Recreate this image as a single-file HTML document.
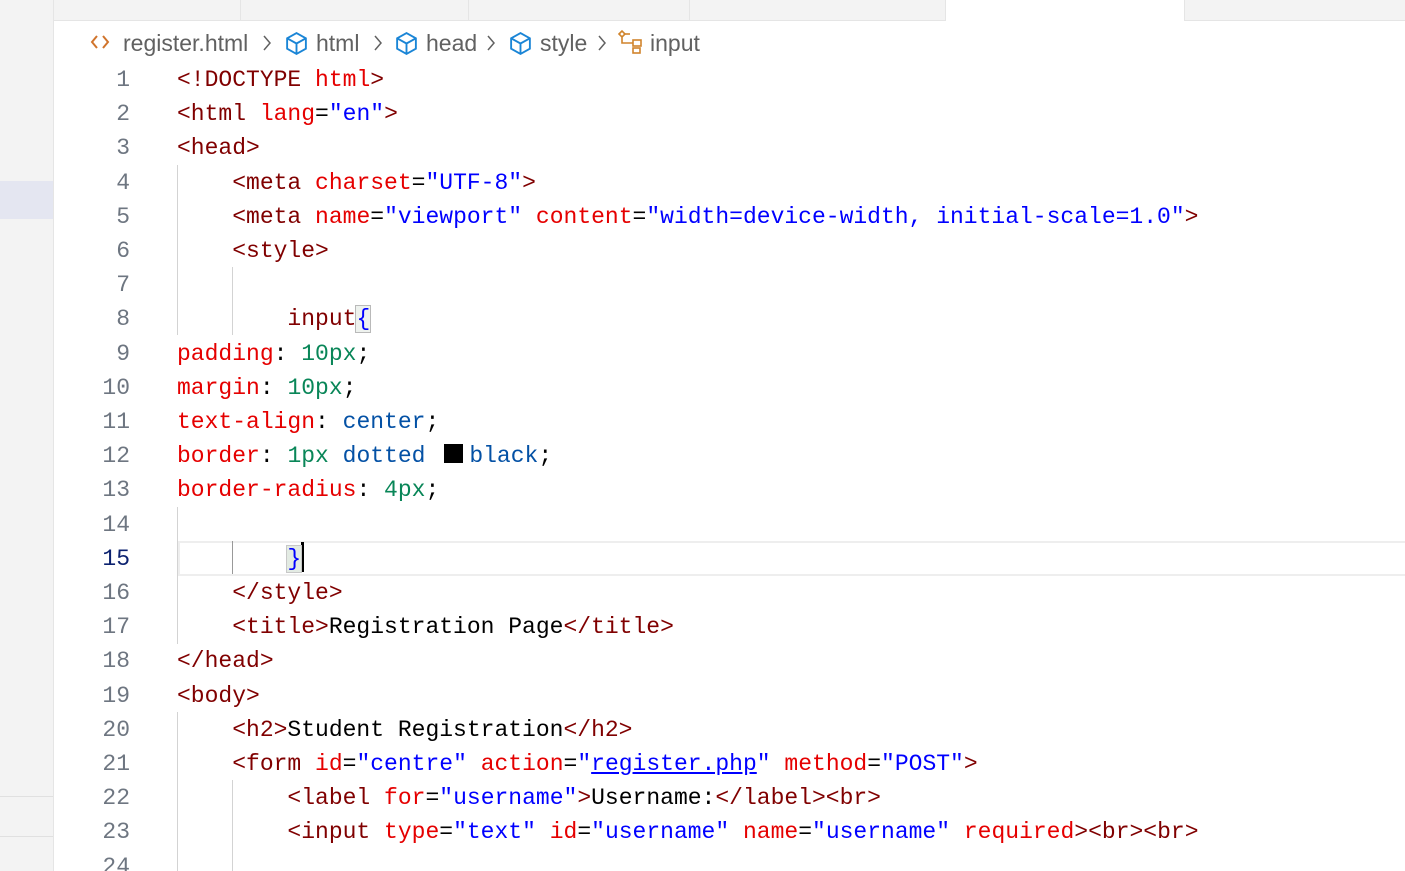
<!DOCTYPE html>
<html><head><meta charset="utf-8">
<style>
html,body{margin:0;padding:0;background:#fff;width:1405px;height:871px;overflow:hidden;position:relative;font-family:"Liberation Sans",sans-serif}
.side{position:absolute;left:0;top:0;width:53px;height:871px;background:#f3f3f3;border-right:1px solid #e5e5e5}
.sel{position:absolute;left:0;top:181px;width:53px;height:38px;background:#e4e6f1}
.hl{position:absolute;left:0;width:53px;height:1px;background:#e0e0e0}
.tabs{position:absolute;left:54px;top:0;right:0;height:20px;background:#f3f3f3;border-bottom:1px solid #e5e5e5}
.tab{position:absolute;top:0;height:20px;border-right:1px solid #e5e5e5}
.b{position:absolute;top:29px;font-size:23px;color:#616161;white-space:nowrap;line-height:28px}
.bi{position:absolute;top:31px}
.code{position:absolute;left:0;top:63px;font-family:"Liberation Mono",monospace;font-size:23px}
.ln{position:absolute;left:60px;width:70px;text-align:right;color:#6e7681;height:34.2px;line-height:34.2px}
.l{position:absolute;left:177px;white-space:pre;height:34.2px;line-height:34.2px;color:#800000}
.a{color:#e50000}.v{color:#0000ff}.n{color:#098658}.k{color:#0451a5}.t{color:#000}
.g{position:absolute;width:1px;background:#d3d3d3}
.cur{position:absolute;left:178px;top:541px;right:0;height:31px;border:2px solid #eeeeee;border-right:none}
</style></head><body>
<div class="side"></div><div class="sel"></div>
<div class="hl" style="top:796px"></div><div class="hl" style="top:836px"></div>
<div class="tabs">
<div class="tab" style="left:0;width:186px"></div>
<div class="tab" style="left:187px;width:227px"></div>
<div class="tab" style="left:415px;width:220px"></div>
<div class="tab" style="left:636px;width:255px"></div>
<div class="tab" style="left:892px;width:238px;background:#fff;height:21px"></div>
</div>
<svg class="bi" style="left:90px;top:34px" width="20" height="16" viewBox="0 0 20 16" fill="none" stroke="#d0742c" stroke-width="2"><path d="M7 2 L2 8 L7 14 M13 2 L18 8 L13 14"/></svg>
<div class="b" style="left:123px">register.html</div>
<svg class="bi" style="left:261px;top:33px" width="12" height="20" viewBox="0 0 12 20" fill="none" stroke="#616161" stroke-width="1.5"><path d="M3 3 L9 10 L3 17"/></svg>
<svg class="bi" style="left:284px" width="25" height="25" viewBox="0 0 24 24" fill="none" stroke="#1a85d6" stroke-width="1.8"><path d="M12 2 L21 7 V17 L12 22 L3 17 V7 Z M3 7 L12 12 L21 7 M12 12 V22"/></svg>
<div class="b" style="left:316px">html</div>
<svg class="bi" style="left:372px;top:33px" width="12" height="20" viewBox="0 0 12 20" fill="none" stroke="#616161" stroke-width="1.5"><path d="M3 3 L9 10 L3 17"/></svg>
<svg class="bi" style="left:394px" width="25" height="25" viewBox="0 0 24 24" fill="none" stroke="#1a85d6" stroke-width="1.8"><path d="M12 2 L21 7 V17 L12 22 L3 17 V7 Z M3 7 L12 12 L21 7 M12 12 V22"/></svg>
<div class="b" style="left:426px">head</div>
<svg class="bi" style="left:485px;top:33px" width="12" height="20" viewBox="0 0 12 20" fill="none" stroke="#616161" stroke-width="1.5"><path d="M3 3 L9 10 L3 17"/></svg>
<svg class="bi" style="left:508px" width="25" height="25" viewBox="0 0 24 24" fill="none" stroke="#1a85d6" stroke-width="1.8"><path d="M12 2 L21 7 V17 L12 22 L3 17 V7 Z M3 7 L12 12 L21 7 M12 12 V22"/></svg>
<div class="b" style="left:540px">style</div>
<svg class="bi" style="left:596px;top:33px" width="12" height="20" viewBox="0 0 12 20" fill="none" stroke="#616161" stroke-width="1.5"><path d="M3 3 L9 10 L3 17"/></svg>
<svg class="bi" style="left:617px;top:29px" width="27" height="26" viewBox="0 0 27 26" fill="none" stroke="#d0842c" stroke-width="1.6"><path d="M2 5 L5 2 L8 5 L5 8 Z M5 8 V14 H16"/><rect x="16" y="11" width="8" height="6"/><rect x="16" y="19" width="7" height="5"/><path d="M8 5 H13"/></svg>
<div class="b" style="left:650px">input</div>
<div class="cur"></div>
<div class="g" style="left:177px;top:165px;height:170px"></div>
<div class="g" style="left:232px;top:267px;height:68px"></div>
<div class="g" style="left:177px;top:507px;height:137px"></div>
<div class="g" style="left:232px;top:541px;height:33px;background:#999"></div>
<div class="g" style="left:177px;top:712px;height:159px"></div>
<div class="g" style="left:232px;top:780px;height:91px"></div>
<div class="code">
<div class="ln" style="top:0px">1</div><div class="l" style="top:0px">&lt;!DOCTYPE <span class="a">html</span>&gt;</div>
<div class="ln" style="top:34.2px">2</div><div class="l" style="top:34.2px">&lt;html <span class="a">lang</span><span class="t">=</span><span class="v">"en"</span>&gt;</div>
<div class="ln" style="top:68.4px">3</div><div class="l" style="top:68.4px">&lt;head&gt;</div>
<div class="ln" style="top:102.6px">4</div><div class="l" style="top:102.6px">    &lt;meta <span class="a">charset</span><span class="t">=</span><span class="v">"UTF-8"</span>&gt;</div>
<div class="ln" style="top:136.8px">5</div><div class="l" style="top:136.8px">    &lt;meta <span class="a">name</span><span class="t">=</span><span class="v">"viewport"</span> <span class="a">content</span><span class="t">=</span><span class="v">"width=device-width, initial-scale=1.0"</span>&gt;</div>
<div class="ln" style="top:171px">6</div><div class="l" style="top:171px">    &lt;style&gt;</div>
<div class="ln" style="top:205.2px">7</div>
<div class="ln" style="top:239.4px">8</div><div class="l" style="top:239.4px">        <span style="color:#800000">input</span><span class="v" style="outline:1px solid #b9b9b9;background:#eef2ee">{</span></div>
<div class="ln" style="top:273.6px">9</div><div class="l" style="top:273.6px"><span class="a">padding</span><span class="t">: </span><span class="n">10px</span><span class="t">;</span></div>
<div class="ln" style="top:307.8px">10</div><div class="l" style="top:307.8px"><span class="a">margin</span><span class="t">: </span><span class="n">10px</span><span class="t">;</span></div>
<div class="ln" style="top:342px">11</div><div class="l" style="top:342px"><span class="a">text-align</span><span class="t">: </span><span class="k">center</span><span class="t">;</span></div>
<div class="ln" style="top:376.2px">12</div><div class="l" style="top:376.2px"><span class="a">border</span><span class="t">: </span><span class="n">1px</span> <span class="k">dotted</span> <span style="display:inline-block;width:19px;height:19px;background:#000;vertical-align:-1px;margin:0 6px 0 5px"></span><span class="k">black</span><span class="t">;</span></div>
<div class="ln" style="top:410.4px">13</div><div class="l" style="top:410.4px"><span class="a">border-radius</span><span class="t">: </span><span class="n">4px</span><span class="t">;</span></div>
<div class="ln" style="top:444.6px">14</div>
<div class="ln" style="top:478.8px;color:#0b216f">15</div><div class="l" style="top:478.8px">        <span class="v" style="background:#e3ebe3;outline:1px solid #c8c8c8">}</span><span style="display:inline-block;width:3px;height:30px;background:#000;vertical-align:-7px"></span></div>
<div class="ln" style="top:513px">16</div><div class="l" style="top:513px">    &lt;/style&gt;</div>
<div class="ln" style="top:547.2px">17</div><div class="l" style="top:547.2px">    &lt;title&gt;<span class="t">Registration Page</span>&lt;/title&gt;</div>
<div class="ln" style="top:581.4px">18</div><div class="l" style="top:581.4px">&lt;/head&gt;</div>
<div class="ln" style="top:615.6px">19</div><div class="l" style="top:615.6px">&lt;body&gt;</div>
<div class="ln" style="top:649.8px">20</div><div class="l" style="top:649.8px">    &lt;h2&gt;<span class="t">Student Registration</span>&lt;/h2&gt;</div>
<div class="ln" style="top:684px">21</div><div class="l" style="top:684px">    &lt;form <span class="a">id</span><span class="t">=</span><span class="v">"centre"</span> <span class="a">action</span><span class="t">=</span><span class="v">"<u>register.php</u>"</span> <span class="a">method</span><span class="t">=</span><span class="v">"POST"</span>&gt;</div>
<div class="ln" style="top:718.2px">22</div><div class="l" style="top:718.2px">        &lt;label <span class="a">for</span><span class="t">=</span><span class="v">"username"</span>&gt;<span class="t">Username:</span>&lt;/label&gt;&lt;br&gt;</div>
<div class="ln" style="top:752.4px">23</div><div class="l" style="top:752.4px">        &lt;input <span class="a">type</span><span class="t">=</span><span class="v">"text"</span> <span class="a">id</span><span class="t">=</span><span class="v">"username"</span> <span class="a">name</span><span class="t">=</span><span class="v">"username"</span> <span class="a">required</span>&gt;&lt;br&gt;&lt;br&gt;</div>
<div class="ln" style="top:786.6px">24</div>
</div>
</body></html>
